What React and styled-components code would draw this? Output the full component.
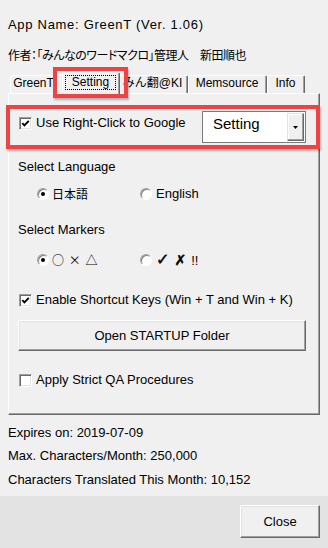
import React from 'react';
import styled, { createGlobalStyle } from 'styled-components';

const Global = createGlobalStyle`
  html, body { margin: 0; padding: 0; background: #f0f0f0; }
  body {
    font-family: "Liberation Sans", "Noto Sans CJK JP", sans-serif;
    font-size: 13px;
    color: #000;
  }
`;

const Window = styled.div`
  position: relative;
  width: 328px;
  height: 548px;
  background: #f0f0f0;
  display: flex;
  flex-direction: column;
  overflow: hidden;
`;

const Header = styled.div`
  padding-left: 8px;
`;

const Line = styled.div`
  height: 16px;
  line-height: 16px;
  margin-top: ${(p) => p.$mt || 0}px;
  white-space: nowrap;
  letter-spacing: ${(p) => p.$ls || 0}px;
  font-size: ${(p) => p.$fs || 13}px;
  font-feature-settings: ${(p) => (p.$palt ? '"palt"' : 'normal')};
`;

const TabStrip = styled.div`
  display: flex;
  align-items: flex-end;
  height: 21px;
  margin-top: 8px;
  padding-left: 10px;
`;

const Tab = styled.div`
  position: relative;
  z-index: ${(p) => (p.$active ? 2 : 1)};
  box-sizing: border-box;
  flex: none;
  width: ${(p) => p.$w + (p.$active ? 4 : 0)}px;
  height: ${(p) => (p.$active ? 22 : 18)}px;
  margin: 0 ${(p) => (p.$active ? -2 : 0)}px ${(p) => (p.$active ? -1 : 0)}px;
  background: #f0f0f0;
  border: 1px solid;
  border-bottom: none;
  border-color: #fff #696969 transparent #fff;
  box-shadow: inset -1px 0 0 #a0a0a0;
  border-radius: 2px 2px 0 0;
  font-size: 12px;
  line-height: 14px;
  text-align: center;
  white-space: nowrap;
  padding-right: ${(p) => p.$pr || 1}px;
  display: flex;
  justify-content: center;
  align-items: flex-start;
`;

const TabLabel = styled.span`
  display: block;
  box-sizing: border-box;
  margin-top: ${(p) => (p.$focus ? 2 : 0)}px;
  height: ${(p) => (p.$focus ? 15 : 14)}px;
  line-height: ${(p) => (p.$focus ? 12 : 14)}px;
  padding: 0 ${(p) => (p.$focus ? 6 : 0)}px;
  border: ${(p) => (p.$focus ? '1px dotted #000' : 'none')};
`;

const Panel = styled.div`
  position: relative;
  box-sizing: border-box;
  width: 312px;
  height: 322px;
  margin-left: 8px;
  border: 1px solid;
  border-color: #fff #696969 #696969 #fff;
  box-shadow: inset -1px -1px 0 #a0a0a0;
  padding: 17px 13px 0 9px;
  display: flex;
  flex-direction: column;
`;

const TopRow = styled.div`
  display: flex;
  justify-content: space-between;
  align-items: flex-start;
  height: 32px;
`;

const CheckRow = styled.label`
  display: flex;
  align-items: center;
  gap: 4px;
  height: 16px;
  line-height: 16px;
  padding-left: 1px;
  margin-top: ${(p) => p.$mt || 0}px;
  white-space: nowrap;
`;

const Box = styled.span`
  box-sizing: border-box;
  flex: none;
  width: 13px;
  height: 13px;
  background: #fff;
  border: 1px solid;
  border-color: #a0a0a0 #fff #fff #a0a0a0;
  box-shadow: inset 1px 1px 0 #696969, inset -1px -1px 0 #e3e3e3;
  display: flex;
  align-items: center;
  justify-content: center;
`;

const Check = ({ on }) => (
  <Box>
    {on && (
      <svg width="9" height="9" viewBox="0 0 9 9">
        <polyline points="1.3,4.2 3.4,6.4 7.8,1.8" fill="none" stroke="#000" strokeWidth="1.9" />
      </svg>
    )}
  </Box>
);

const Select = styled.div`
  box-sizing: border-box;
  width: 104px;
  height: 32px;
  background: #fff;
  border: 1px solid #7a7a7a;
  display: flex;
  font-size: 15px;
  line-height: 20px;
`;

const SelectText = styled.span`
  flex: 1;
  padding: 2px 0 0 10px;
`;

const ArrowBtn = styled.span`
  box-sizing: border-box;
  width: 17px;
  margin: 1px;
  background: #f0f0f0;
  border: 1px solid;
  border-color: #e3e3e3 #696969 #696969 #e3e3e3;
  box-shadow: inset -1px -1px 0 #a0a0a0, inset 1px 1px 0 #fff;
  display: flex;
  align-items: center;
  justify-content: center;
`;

const SectionTitle = styled.div`
  height: 16px;
  line-height: 16px;
  margin-top: ${(p) => p.$mt || 0}px;
  white-space: nowrap;
`;

const RadioGroup = styled.div`
  display: flex;
  height: 16px;
  margin-top: ${(p) => p.$mt || 0}px;
  padding-left: 19px;
`;

const RadioOption = styled.label`
  display: flex;
  align-items: center;
  gap: ${(p) => p.$gap || 3}px;
  width: ${(p) => p.$w || 'auto'};
  line-height: 16px;
  white-space: nowrap;
`;

const Circle = styled.span`
  position: relative;
  box-sizing: border-box;
  flex: none;
  width: 12px;
  height: 12px;
  border-radius: 50%;
  background: #fff;
  border: 1px solid;
  border-color: #a0a0a0 #fff #fff #a0a0a0;
  box-shadow: inset 1px 1px 0 #808080;
  &::after {
    content: '';
    display: ${(p) => (p.$on ? 'block' : 'none')};
    position: absolute;
    left: 3px;
    top: 3px;
    width: 4px;
    height: 4px;
    border-radius: 50%;
    background: #000;
  }
`;

const JpText = styled.span`
  font-family: "Noto Sans CJK JP", sans-serif;
  font-size: 12px;
  word-spacing: ${(p) => p.$ws || 0}px;
`;

const Mark = styled.span`
  font-family: "DejaVu Sans", sans-serif;
  font-weight: bold;
  font-size: ${(p) => p.$fs || 15}px;
  margin-right: ${(p) => p.$mr || 0}px;
  -webkit-text-stroke: 0.5px #000;
`;

const Button = styled.div`
  box-sizing: border-box;
  width: ${(p) => p.$w || 'auto'};
  height: ${(p) => p.$h}px;
  margin-top: ${(p) => p.$mt || 0}px;
  background: #f0f0f0;
  border: 1px solid;
  border-color: #fff #696969 #696969 #fff;
  box-shadow: inset -1px -1px 0 #a0a0a0, inset 1px 1px 0 #e3e3e3;
  display: flex;
  align-items: center;
  justify-content: center;
  white-space: nowrap;
  font-size: 13px;
`;

const Info = styled.div`
  padding-left: 8px;
`;

const Footer = styled.div`
  margin-top: auto;
  height: 52px;
  box-sizing: border-box;
  background: #e3e3e3;
  display: flex;
  justify-content: flex-end;
  align-items: flex-start;
  padding: 9px 8px 0 0;
`;

const Annotation = styled.div`
  position: absolute;
  z-index: 5;
  box-sizing: border-box;
  left: ${(p) => p.$x}px;
  top: ${(p) => p.$y}px;
  width: ${(p) => p.$w}px;
  height: ${(p) => p.$h}px;
  border: 4px solid #ef4242;
  box-shadow: 1px 2px 2px rgba(0, 0, 0, 0.28);
  pointer-events: none;
`;

const tabs = [
  { label: 'GreenT', w: 54, pr: 7 },
  { label: 'Setting', w: 54, active: true },
  { label: 'みん翻@KI', w: 70 },
  { label: 'Memsource', w: 79 },
  { label: 'Info', w: 38 },
];

export default function App() {
  return (
    <>
      <Global />
      <Window>
        <Header>
          <Line $mt={17} $ls={0.7}>App Name: GreenT (Ver. 1.06)</Line>
          <Line $mt={15} $fs={12} $ls={-0.5} $palt>作者：「みんなのワードマクロ」管理人　新田順也</Line>
        </Header>

        <TabStrip>
          {tabs.map((t) => (
            <Tab key={t.label} $w={t.w} $pr={t.pr} $active={t.active}>
              <TabLabel $focus={t.active}>{t.label}</TabLabel>
            </Tab>
          ))}
        </TabStrip>

        <Panel>
          <TopRow>
            <CheckRow $mt={4}>
              <Check on />
              Use Right-Click to Google
            </CheckRow>
            <Select>
              <SelectText>Setting</SelectText>
              <ArrowBtn>
                <svg width="5" height="3" viewBox="0 0 5 3">
                  <polygon points="0,0 5,0 2.5,3" fill="#000" />
                </svg>
              </ArrowBtn>
            </Select>
          </TopRow>

          <SectionTitle $mt={16}>Select Language</SectionTitle>
          <RadioGroup $mt={11}>
            <RadioOption $w="103px">
              <Circle $on />
              <JpText>日本語</JpText>
            </RadioOption>
            <RadioOption $gap={4}>
              <Circle />
              English
            </RadioOption>
          </RadioGroup>

          <SectionTitle $mt={20}>Select Markers</SectionTitle>
          <RadioGroup $mt={14}>
            <RadioOption $w="103px">
              <Circle $on />
              <JpText $ws={2}>○ × △</JpText>
            </RadioOption>
            <RadioOption $gap={4}>
              <Circle />
              <span>
                <Mark $mr={5} $fs={16}>✓</Mark>
                <Mark $mr={5} $fs={14}>✗</Mark>
                !!
              </span>
            </RadioOption>
          </RadioGroup>

          <CheckRow $mt={24}>
            <Check on />
            Enable Shortcut Keys (Win + T and Win + K)
          </CheckRow>

          <Button $mt={12} $h={31}>Open STARTUP Folder</Button>

          <CheckRow $mt={21}>
            <Check />
            Apply Strict QA Procedures
          </CheckRow>
        </Panel>

        <Info>
          <Line $mt={10}>Expires on: 2019-07-09</Line>
          <Line $mt={7}>Max. Characters/Month: 250,000</Line>
          <Line $mt={8}>Characters Translated This Month: 10,152</Line>
        </Info>

        <Footer>
          <Button $w="80px" $h={33}>Close</Button>
        </Footer>

        <Annotation $x={53} $y={67} $w={75} $h={31} />
        <Annotation $x={6} $y={105} $w={314} $h={44} />
      </Window>
    </>
  );
}
